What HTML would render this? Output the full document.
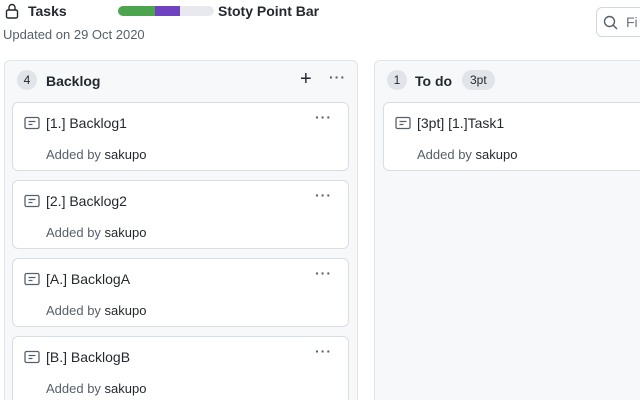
<!DOCTYPE html>
<html style="width:640px;height:400px;overflow:hidden"><head><meta charset="utf-8"><style>
*{box-sizing:border-box;margin:0;padding:0}
body{width:640px;height:400px;overflow:hidden;background:#fff;font-family:"Liberation Sans",sans-serif;color:#24292f;position:relative}
.a{position:absolute}
.col{position:absolute;top:60px;height:340px;background:#f6f8fa;border:1px solid #e1e4e8;border-bottom:none;border-radius:6px 6px 0 0}
.card{position:absolute;left:8px;height:69px;background:#fff;border:1px solid #d8dee4;border-radius:6px}
.card .t{position:absolute;left:33px;top:12px;font-size:14px}
.card .s{position:absolute;left:33px;top:44px;font-size:13px;color:#57606a}
.card .s b{font-weight:normal;color:#24292f}
.card svg.n{position:absolute;left:11px;top:13px}
.dots{position:absolute;font-size:14px;font-weight:bold;letter-spacing:1px;color:#57606a}
.cnt{position:absolute;width:20px;height:20px;border-radius:10px;background:#e1e4e8;font-size:12px;text-align:center;line-height:20px}
</style></head><body>
<svg class="a" style="left:5px;top:3px" width="14" height="16" viewBox="0 0 14 16"><rect x="1.5" y="7" width="11" height="8" rx="1.5" fill="none" stroke="#24292f" stroke-width="1.4"/><path d="M4 7V4.5a3 3 0 0 1 6 0V7" fill="none" stroke="#24292f" stroke-width="1.4"/></svg>
<div class="a" style="left:28px;top:3px;font-size:14px;font-weight:bold">Tasks</div>
<div class="a" style="left:118px;top:6px;width:96px;height:10px;border-radius:5px;background:#e8e9ee;overflow:hidden"><div class="a" style="left:0;top:0;width:37px;height:10px;background:#4ca44f"></div><div class="a" style="left:37px;top:0;width:25px;height:10px;background:#6f42c1"></div></div>
<div class="a" style="left:218px;top:3px;font-size:14px;font-weight:bold">Stoty Point Bar</div>
<div class="a" style="left:3px;top:27px;font-size:13px;color:#57606a">Updated on 29 Oct 2020</div>
<div class="a" style="left:596px;top:7px;width:60px;height:30px;border:1px solid #d0d7de;border-radius:6px"></div>
<svg class="a" style="left:603px;top:15px" width="15" height="15" viewBox="0 0 15 15"><circle cx="6.5" cy="6.5" r="5" fill="none" stroke="#57606a" stroke-width="1.4"/><path d="M10 10l4 4" stroke="#57606a" stroke-width="1.4"/></svg>
<div class="a" style="left:626px;top:14px;font-size:14px;color:#6e7781">Fi</div>

<div class="col" style="left:4px;width:354px">
<div class="cnt" style="left:12px;top:9px">4</div>
<div class="a" style="left:41px;top:12px;font-size:14px;font-weight:bold">Backlog</div>
<div class="a" style="left:295px;top:7px;font-size:20px;color:#24292f">+</div>
<div class="dots" style="left:324px;top:8px">···</div>
</div>
<div class="col" style="left:374px;width:266px;border-right:none;border-radius:6px 0 0 0">
<div class="cnt" style="left:12px;top:9px">1</div>
<div class="a" style="left:40px;top:12px;font-size:14px;font-weight:bold">To do</div>
<div class="a" style="left:87px;top:9px;height:20px;padding:0 8px;border-radius:10px;background:#e1e4e8;font-size:12px;line-height:20px">3pt</div>
</div>

<div class="card a" style="left:12px;top:102px;width:337px"><svg class="n" width="16" height="14" viewBox="0 0 16 14"><rect x="1" y="1.5" width="14" height="11" rx="1.5" fill="none" stroke="#57606a" stroke-width="1.3"/><path d="M4.5 5.5h7M4.5 8.5h4" stroke="#57606a" stroke-width="1.3"/></svg><div class="t">[1.] Backlog1</div><div class="s">Added by <b>sakupo</b></div><div class="dots" style="left:302px;top:6px">···</div></div>
<div class="card a" style="left:12px;top:180px;width:337px"><svg class="n" width="16" height="14" viewBox="0 0 16 14"><rect x="1" y="1.5" width="14" height="11" rx="1.5" fill="none" stroke="#57606a" stroke-width="1.3"/><path d="M4.5 5.5h7M4.5 8.5h4" stroke="#57606a" stroke-width="1.3"/></svg><div class="t">[2.] Backlog2</div><div class="s">Added by <b>sakupo</b></div><div class="dots" style="left:302px;top:6px">···</div></div>
<div class="card a" style="left:12px;top:258px;width:337px"><svg class="n" width="16" height="14" viewBox="0 0 16 14"><rect x="1" y="1.5" width="14" height="11" rx="1.5" fill="none" stroke="#57606a" stroke-width="1.3"/><path d="M4.5 5.5h7M4.5 8.5h4" stroke="#57606a" stroke-width="1.3"/></svg><div class="t">[A.] BacklogA</div><div class="s">Added by <b>sakupo</b></div><div class="dots" style="left:302px;top:6px">···</div></div>
<div class="card a" style="left:12px;top:336px;width:337px"><svg class="n" width="16" height="14" viewBox="0 0 16 14"><rect x="1" y="1.5" width="14" height="11" rx="1.5" fill="none" stroke="#57606a" stroke-width="1.3"/><path d="M4.5 5.5h7M4.5 8.5h4" stroke="#57606a" stroke-width="1.3"/></svg><div class="t">[B.] BacklogB</div><div class="s">Added by <b>sakupo</b></div><div class="dots" style="left:302px;top:6px">···</div></div>
<div class="card a" style="left:383px;top:102px;width:290px"><svg class="n" width="16" height="14" viewBox="0 0 16 14"><rect x="1" y="1.5" width="14" height="11" rx="1.5" fill="none" stroke="#57606a" stroke-width="1.3"/><path d="M4.5 5.5h7M4.5 8.5h4" stroke="#57606a" stroke-width="1.3"/></svg><div class="t">[3pt] [1.]Task1</div><div class="s">Added by <b>sakupo</b></div></div>
</body></html>
